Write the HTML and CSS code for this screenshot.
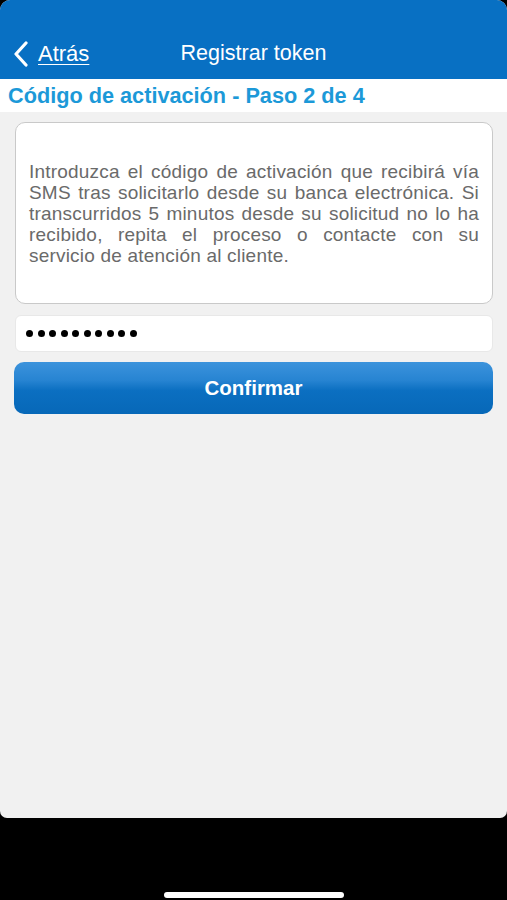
FILE: index.html
```html
<!DOCTYPE html>
<html lang="es">
<head>
    <meta charset="UTF-8">
    <meta name="viewport" content="width=device-width, initial-scale=1.0">
    <title>Registrar token</title>
    <link rel="stylesheet" href="styles.css">
</head>
<body>
    <div class="screen">
        <div class="navbar">
            <a class="back-link" href="#">
                <svg class="chevron" width="18" height="26" viewBox="0 0 18 26">
                    <path d="M14 2 L4 13 L14 24" fill="none" stroke="#fff" stroke-width="3.2" stroke-linecap="round" stroke-linejoin="round"/>
                </svg>
                <span class="back-label">Atrás</span>
            </a>
            <div class="nav-title">Registrar token</div>
            <div></div>
        </div>

        <div class="step-title">Código de activación - Paso 2 de 4</div>

        <div class="content">
            <div class="info-card">
                <p>Introduzca el código de activación que recibirá vía SMS tras solicitarlo desde su banca electrónica. Si transcurridos 5 minutos desde su solicitud no lo ha recibido, repita el proceso o contacte con su servicio de atención al cliente.</p>
            </div>

            <div class="code-field">
                <span class="dot"></span><span class="dot"></span><span class="dot"></span><span class="dot"></span><span class="dot"></span>
                <span class="dot"></span><span class="dot"></span><span class="dot"></span><span class="dot"></span><span class="dot"></span>
            </div>

            <button class="confirm-button">Confirmar</button>
        </div>
    </div>

    <div class="home-bar"></div>
</body>
</html>
```

FILE: styles.css
```css
body {
    margin: 0;
    background-color: #000;
    font-family: "Liberation Sans", Arial, sans-serif;
}

.screen {
    height: 818px;
    background-color: #f1f1f1;
    border-radius: 10px 10px 7px 7px;
    overflow: hidden;
    display: flex;
    flex-direction: column;
}

.navbar {
    height: 79px;
    box-sizing: border-box;
    padding-top: 28px;
    background-color: #0870c3;
    display: grid;
    grid-template-columns: 1fr auto 1fr;
    align-items: center;
    color: #fff;
}

.back-link {
    display: flex;
    align-items: center;
    padding-left: 12px;
    color: #fff;
    text-decoration: none;
}

.chevron {
    margin-right: 8px;
}

.back-label {
    font-size: 22px;
    text-decoration: underline;
    text-underline-offset: 3px;
    text-decoration-thickness: 1px;
}

.nav-title {
    font-size: 21.5px;
}

.step-title {
    height: 33px;
    line-height: 33px;
    padding-left: 8px;
    background-color: #fff;
    color: #1c99d8;
    font-size: 21.7px;
    font-weight: bold;
}

.content {
    padding: 10px 14px 0 15px;
}

.info-card {
    height: 182px;
    box-sizing: border-box;
    display: flex;
    align-items: center;
    padding: 0 13px;
    background-color: #fff;
    border: 1px solid #c9c9c9;
    border-radius: 10px;
}

.info-card p {
    margin: 0;
    font-size: 19px;
    letter-spacing: 0.2px;
    line-height: 21px;
    color: #6a6a6a;
    text-align: justify;
}

.code-field {
    height: 37px;
    box-sizing: border-box;
    margin-top: 11px;
    padding-left: 10px;
    display: flex;
    align-items: center;
    gap: 4.5px;
    background-color: #fff;
    border: 1px solid #e8e8e8;
    border-radius: 6px;
}

.dot {
    width: 7px;
    height: 7px;
    border-radius: 50%;
    background-color: #000;
}

.confirm-button {
    display: block;
    width: calc(100% + 1px);
    height: 52px;
    margin-top: 10px;
    margin-left: -1px;
    border: none;
    border-radius: 10px;
    background: linear-gradient(to bottom, #3c93dc 0%, #2784d2 35%, #0b6fc1 55%, #0768b8 100%);
    color: #fff;
    font-family: "Liberation Sans", Arial, sans-serif;
    font-size: 20.5px;
    font-weight: bold;
    cursor: pointer;
}

.home-bar {
    width: 180px;
    height: 6px;
    margin: 74px auto 0 164px;
    background-color: #fff;
    border-radius: 3px;
}
```
